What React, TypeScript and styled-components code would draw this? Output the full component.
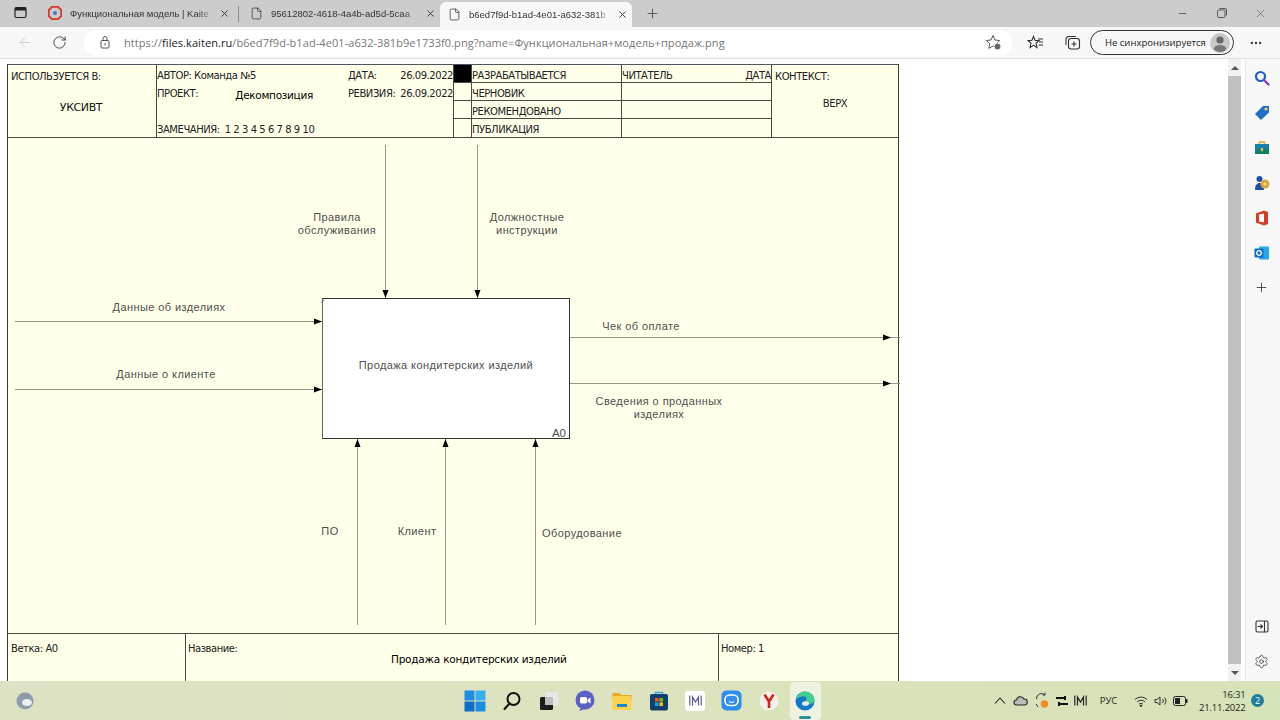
import React from 'react';
import styled, { createGlobalStyle } from 'styled-components';
import { ArrowLeft, Ellipsis, File, Minus, Plus, RotateCw, Settings, X } from 'lucide-react';

const GlobalStyle = createGlobalStyle`
  html, body {
    margin: 0;
    padding: 0;
    width: 1280px;
    height: 720px;
    overflow: hidden;
    background: #fff;
  }
  * { box-sizing: border-box; }
`;

const Page = styled.div`
  width: 1280px;
  height: 720px;
  display: flex;
  flex-direction: column;
  font-family: "Open Sans", "Liberation Sans", sans-serif;
  color: #333;
`;

/* ---- tab strip ---- */
const TabStrip = styled.div`
  height: 27px;
  flex: none;
  display: flex;
  align-items: flex-end;
  background: #cccccc;
  padding-left: 14px;
`;

const TabMenu = styled.div`
  width: 26px;
  height: 27px;
  padding-bottom: 2px;
  display: flex;
  align-items: center;
  color: #222;
`;

const Divider = styled.div`
  width: 1px;
  height: 16px;
  background: #8d8d8d;
  align-self: center;
  flex: none;
`;

const Tab = styled.div<{ $active?: boolean; $width: number; $left?: number; $right?: number }>`
  width: ${(p) => p.$width}px;
  height: ${(p) => (p.$active ? 25 : 26)}px;
  flex: none;
  display: flex;
  align-items: center;
  gap: 8px;
  padding: 0 ${(p) => p.$right ?? 8}px ${(p) => (p.$active ? 1 : 2)}px ${(p) => p.$left ?? 8}px;
  border-radius: 6px 6px 0 0;
  background: ${(p) => (p.$active ? '#f7f7f7' : 'transparent')};
  font-family: "Liberation Sans", Arial, sans-serif;
  font-size: 9.5px;
  color: #333;
`;

const TabTitle = styled.span`
  flex: 1;
  white-space: nowrap;
  mask-image: linear-gradient(to right, #000 90%, rgba(0, 0, 0, 0.25) 100%);
`;

const NewTab = styled.div`
  width: 24px;
  height: 26px;
  margin-left: 8px;
  padding-bottom: 2px;
  display: flex;
  align-items: center;
  justify-content: center;
  color: #333;
`;

const WindowControls = styled.div`
  margin-left: auto;
  display: flex;
  align-items: center;
  height: 26px;
  padding-bottom: 2px;
  color: #555;
`;

const WindowButton = styled.div`
  width: 39px;
  display: flex;
  justify-content: center;
`;

/* ---- toolbar ---- */
const Toolbar = styled.div`
  height: 32px;
  flex: none;
  display: flex;
  align-items: center;
  background: #f7f7f7;
  border-bottom: 1px solid #e2e2e2;
  padding-left: 14px;
`;

const NavButton = styled.div<{ $muted?: boolean; $width: number }>`
  width: ${(p) => p.$width}px;
  flex: none;
  display: flex;
  align-items: center;
  justify-content: center;
  color: ${(p) => (p.$muted ? '#c4c4c4' : '#333')};
`;

const AddressBar = styled.div`
  width: 928px;
  height: 26px;
  flex: none;
  display: flex;
  align-items: center;
  background: #fff;
  border-radius: 13px;
  padding-left: 15px;
  padding-right: 10px;
  font-size: 11px;
`;

const Url = styled.span`
  margin-left: 13px;
  flex: 1;
  color: #777;
  white-space: nowrap;
  letter-spacing: 0.07px;
  b { font-weight: 400; color: #222; }
`;

const SyncPill = styled.div`
  width: 144px;
  height: 25px;
  flex: none;
  margin-left: 4px;
  display: flex;
  align-items: center;
  justify-content: space-between;
  padding: 0 3px 0 14px;
  border: 1px solid #333;
  border-radius: 13px;
  font-size: 9.5px;
  color: #222;
  white-space: nowrap;
`;

const Avatar = styled.div`
  width: 20px;
  height: 20px;
  border-radius: 50%;
  background: #c8c8c8;
  display: flex;
  align-items: center;
  justify-content: center;
  overflow: hidden;
`;

/* ---- main area ---- */
const Main = styled.div`
  flex: 1;
  min-height: 0;
  display: flex;
  background: #fff;
`;

const Viewer = styled.div`
  width: 1228px;
  flex: none;
  overflow: hidden;
  padding: 5px 0 0 7px;
`;

const Sheet = styled.div`
  width: 892px;
  height: 640px;
  display: flex;
  flex-direction: column;
  background: #ffffea;
  border: 1px solid #3a3a30;
  border-top-color: #4d5560;
  font-family: "DejaVu Sans", "Liberation Sans", sans-serif;
  font-size: 10px;
  letter-spacing: -0.45px;
  color: #222;
`;

const Header = styled.div`
  height: 73px;
  flex: none;
  display: grid;
  grid-template-columns: 149px 297px 318px 1fr;
  border-bottom: 1px solid #4a4a40;
`;

const HeaderCell = styled.div`
  padding: 6px 3px;
  border-right: 1px solid #4a4a40;
  &:last-child { border-right: 0; }
`;

const AuthorCell = styled.div`
  border-right: 1px solid #4a4a40;
`;

const UsedAt = styled.div`
  margin-top: 19px;
  text-align: center;
  font-size: 11px;
  letter-spacing: -0.4px;
  padding-right: 2px;
  color: #111;
`;

const AuthorGrid = styled.div`
  display: grid;
  grid-template-columns: 191px 1fr;
  grid-template-rows: 18px 18px 18px 13px;
  height: 72px;
  padding-top: 5px;
  white-space: nowrap;
`;

const DateLine = styled.div`
  display: flex;
  justify-content: space-between;
`;

const ProjectLine = styled.div`
  display: flex;
  justify-content: space-between;
  padding-right: 35px;
`;

const ProjectName = styled.span`
  margin-top: 1px;
  font-size: 10.5px;
  letter-spacing: -0.3px;
  color: #000;
`;

const Remarks = styled.div`
  grid-column: 1 / 3;
  grid-row: 4;
  display: flex;
  gap: 5px;
`;

const StatusGrid = styled.div`
  display: grid;
  grid-template-columns: 18px 150px 150px;
  grid-template-rows: 18px 18px 18px 19px;
  border-right: 1px solid #4a4a40;
`;

const StatusMark = styled.div<{ $filled?: boolean; $last?: boolean }>`
  background: ${(p) => (p.$filled ? '#000' : 'transparent')};
  border-right: 1px solid #4a4a40;
  border-bottom: ${(p) => (p.$last ? 0 : 1)}px solid #4a4a40;
`;

const StatusCell = styled.div<{ $last?: boolean; $split?: boolean; $edge?: boolean }>`
  display: flex;
  align-items: center;
  justify-content: ${(p) => (p.$split ? 'space-between' : 'flex-start')};
  padding: ${(p) => (p.$last ? 2 : 4)}px 1px 0 0;
  white-space: nowrap;
  border-right: ${(p) => (p.$edge ? 0 : 1)}px solid #4a4a40;
  border-bottom: ${(p) => (p.$last ? 0 : 1)}px solid #4a4a40;
`;

const ContextValue = styled.div`
  margin-top: 16px;
  text-align: center;
`;

/* ---- IDEF0 canvas ---- */
const Canvas = styled.div`
  position: relative;
  height: 496px;
  flex: none;
  border-bottom: 1px solid #4a4a40;
  font-family: "Liberation Sans", Arial, sans-serif;
  font-size: 11px;
  letter-spacing: 0.42px;
  color: #4f4f4f;
`;

const Wires = styled.svg`
  position: absolute;
  left: 0;
  top: 0;
  width: 892px;
  height: 495px;
`;

const ActivityBox = styled.div`
  position: absolute;
  left: 314px;
  top: 160px;
  width: 248px;
  height: 141px;
  background: #fff;
  border: 1px solid #333;
  border-left-color: #666;
  display: flex;
  align-items: center;
  justify-content: center;
  padding-bottom: 7px;
`;

const BoxCorner = styled.div`
  position: absolute;
  left: 0;
  top: 0;
  width: 4px;
  height: 4px;
  border-top: 1px solid #777;
  transform: rotate(-45deg) translate(-2px, 0);
`;

const BoxNumber = styled.span`
  position: absolute;
  right: 3px;
  bottom: -1px;
  font-size: 11.5px;
  letter-spacing: 0;
`;

const ArrowLabel = styled.div<{ $x: number; $y: number }>`
  position: absolute;
  left: ${(p) => p.$x}px;
  top: ${(p) => p.$y}px;
  transform: translateX(-50%);
  text-align: center;
  white-space: nowrap;
  line-height: 13px;
`;

/* ---- form footer ---- */
const Footer = styled.div`
  flex: 1;
  display: grid;
  grid-template-columns: 178px 533px 1fr;
`;

const FooterCell = styled.div`
  padding: 9px 2px;
  border-right: 1px solid #4a4a40;
  &:first-child { padding-left: 3px; }
  &:last-child { border-right: 0; }
`;

const FooterTitle = styled.div`
  margin: -1px 0 0 0;
  padding-left: 203px;
  font-size: 10.5px;
  letter-spacing: -0.22px;
  color: #000;
  white-space: nowrap;
`;

/* ---- scrollbar & sidebar ---- */
const ScrollBar = styled.div`
  width: 13px;
  flex: none;
  display: flex;
  flex-direction: column;
  align-items: center;
  background: #f1f1f1;
`;

const ScrollArrow = styled.div<{ $down?: boolean }>`
  height: 17px;
  flex: none;
  display: flex;
  align-items: center;
  justify-content: center;
  &::before {
    content: '';
    border-left: 4px solid transparent;
    border-right: 4px solid transparent;
    ${(p) => (p.$down ? 'border-top: 4px solid #555;' : 'border-bottom: 4px solid #555;')}
  }
`;

const ScrollThumb = styled.div`
  flex: 1;
  width: 100%;
  background: #c0c0c0;
`;

const SideGap = styled.div`
  width: 4px;
  flex: none;
  background: #fff;
`;

const SideBar = styled.div`
  flex: 1;
  display: flex;
  flex-direction: column;
  align-items: center;
  padding: 1px 3px 0 0;
  background: #f7f7f7;
  border-left: 1px solid #e6e6e6;
  color: #333;
`;

const SideItem = styled.div`
  height: 35px;
  flex: none;
  display: flex;
  align-items: center;
  justify-content: center;
`;

const SideBottom = styled.div`
  margin-top: auto;
  padding-bottom: 2px;
`;

/* ---- taskbar ---- */
const Taskbar = styled.div`
  height: 39px;
  flex: none;
  display: flex;
  align-items: center;
  background: linear-gradient(90deg, #dde2c4, #dde3bf 40%, #d6e2b8);
  font-family: "Open Sans", "Liberation Sans", sans-serif;
  color: #222;
`;

const Widget = styled.div`
  width: 457px;
  flex: none;
  padding-left: 16px;
  display: flex;
`;

const AppSlot = styled.div<{ $active?: boolean }>`
  width: ${(p) => (p.$active ? 31 : 36.67)}px;
  margin: 0 ${(p) => (p.$active ? 2.83 : 0)}px;
  height: 38px;
  flex: none;
  position: relative;
  display: flex;
  align-items: center;
  justify-content: center;
  border-radius: 4px;
  background: ${(p) => (p.$active ? 'rgba(255,255,255,0.55)' : 'transparent')};
  &::after {
    content: ${(p) => (p.$active ? "''" : 'none')};
    position: absolute;
    bottom: 1px;
    left: 9.5px;
    width: 12px;
    height: 3px;
    border-radius: 2px;
    background: #2f8f9d;
  }
`;

const Tray = styled.div`
  margin-left: 166px;
  display: flex;
  align-items: center;
`;

const TraySlot = styled.div<{ $width: number }>`
  width: ${(p) => p.$width}px;
  flex: none;
  display: flex;
  align-items: center;
  justify-content: center;
  font-size: 9.5px;
`;

const Clock = styled.div`
  width: 52px;
  text-align: right;
  font-size: 9.5px;
  line-height: 13px;
  letter-spacing: -0.2px;
`;

const Badge = styled.div`
  width: 13px;
  height: 13px;
  margin-left: 5.5px;
  border-radius: 50%;
  background: #1f7f9c;
  color: #fff;
  font-size: 9px;
  display: flex;
  align-items: center;
  justify-content: center;
`;

const AppTile = styled.div`
  width: 20px;
  height: 20px;
  display: flex;
  align-items: center;
  justify-content: center;
  background: #fff;
  border-radius: 3px;
`;

/* ---- drawings ---- */
const stroke = '#96968a';

const Arrowhead = ({ x, y, dir }: { x: number; y: number; dir: 'down' | 'up' | 'right' }) => {
  const pts =
    dir === 'down'
      ? `${x - 3},${y - 8} ${x + 3},${y - 8} ${x},${y}`
      : dir === 'up'
      ? `${x - 3},${y + 8} ${x + 3},${y + 8} ${x},${y}`
      : `${x - 8},${y - 3} ${x - 8},${y + 3} ${x},${y}`;
  return <polygon points={pts} fill="#000" />;
};

const DiagramWires = () => (
  <Wires viewBox="0 0 892 495">
    <g stroke={stroke} strokeWidth="1" fill="none">
      <path d="M377.5 7V160" />
      <path d="M469.5 7V160" />
      <path d="M7 183.5H314" />
      <path d="M7 251.5H314" />
      <path d="M562 199.5H892" />
      <path d="M562 245.5H892" />
      <path d="M349.5 301V487" />
      <path d="M437.5 301V487" />
      <path d="M527.5 301V487" />
    </g>
    <Arrowhead x={377.5} y={160} dir="down" />
    <Arrowhead x={469.5} y={160} dir="down" />
    <Arrowhead x={314} y={183.5} dir="right" />
    <Arrowhead x={314} y={251.5} dir="right" />
    <Arrowhead x={883} y={199.5} dir="right" />
    <Arrowhead x={883} y={245.5} dir="right" />
    <Arrowhead x={349.5} y={301} dir="up" />
    <Arrowhead x={437.5} y={301} dir="up" />
    <Arrowhead x={527.5} y={301} dir="up" />
  </Wires>
);

const TabMenuIcon = () => (
  <svg width="13" height="13" viewBox="0 0 13 13">
    <rect x="1" y="1.5" width="11" height="10" rx="1.5" fill="none" stroke="#222" strokeWidth="1.2" />
    <rect x="1" y="1.5" width="11" height="3" fill="#222" />
  </svg>
);

const KaitenIcon = () => (
  <svg width="14" height="14" viewBox="0 0 14 14">
    <polygon points="4,0.8 10,0.8 13.2,4 13.2,10 10,13.2 4,13.2 0.8,10 0.8,4" fill="none" stroke="#d8362a" strokeWidth="1.8" />
    <circle cx="7" cy="7" r="2" fill="#3f7fc4" />
  </svg>
);

const PageLock = () => (
  <svg width="12" height="13" viewBox="0 0 12 13" fill="none" stroke="#555" strokeWidth="1">
    <rect x="2" y="4.5" width="8" height="7.5" rx="1" />
    <path d="M4 4.5V2.5a2 2 0 0 1 4 0v2" />
    <path d="M6 7v2.5" />
  </svg>
);

const StarAdd = () => (
  <svg width="17" height="17" viewBox="0 0 17 17" fill="none" stroke="#555" strokeWidth="1">
    <path d="M8 1.5l2 4.5 4.7.5-3.5 3.2 1 4.6L8 12l-4.2 2.3 1-4.6L1.3 6.5 6 6z" />
    <circle cx="12.5" cy="12.5" r="3.5" fill="#666" stroke="#f7f7f7" />
  </svg>
);

const Favorites = () => (
  <svg width="17" height="16" viewBox="0 0 17 16" fill="none" stroke="#333" strokeWidth="1.1">
    <path d="M6.5 1.5l1.7 4h3.8l-3 2.8 1 4.2-3.5-2.2L3 12.5l1-4.2L1 5.5h3.8z" />
    <path d="M11 4h5M12 7h4M11.5 10h4.5" />
  </svg>
);

const Collections = () => (
  <svg width="17" height="17" viewBox="0 0 17 17" fill="none" stroke="#333" strokeWidth="1.1">
    <rect x="4.5" y="4.5" width="11" height="10.5" rx="2.5" />
    <path d="M10 7.5v5M7.5 10h5" />
    <path d="M12 2.5H5A3 3 0 0 0 2 5.5V11" />
  </svg>
);

const AvatarFigure = () => (
  <svg width="20" height="20" viewBox="0 0 20 20">
    <circle cx="10" cy="7" r="3.6" fill="#666" />
    <ellipse cx="10" cy="15.5" rx="6" ry="3.6" fill="#777" />
  </svg>
);

const RestoreIcon = () => (
  <svg width="10" height="10" viewBox="0 0 10 10" fill="none" stroke="#555" strokeWidth="1">
    <rect x="0.5" y="2" width="7.5" height="7.5" rx="1.3" />
    <path d="M2.5 .5h5.5a1.5 1.5 0 0 1 1.5 1.5v5.5" />
  </svg>
);

const SearchColor = () => (
  <svg width="16" height="16" viewBox="0 0 16 16" fill="none">
    <circle cx="6.5" cy="6.5" r="4.5" stroke="#1d5fc4" strokeWidth="2.2" />
    <path d="M10 10l4.5 4.5" stroke="#8a3fc9" strokeWidth="2.4" strokeLinecap="round" />
  </svg>
);

const TagColor = () => (
  <svg width="16" height="16" viewBox="0 0 16 16">
    <path d="M9 1h6v6.5L7 15 1 9z" fill="#1f6fc8" />
    <circle cx="12" cy="4" r="1.6" fill="#f4d35e" />
  </svg>
);

const CaseColor = () => (
  <svg width="16" height="15" viewBox="0 0 16 15">
    <path d="M5.5 4V2h5v2" fill="none" stroke="#e2a72e" strokeWidth="1.4" />
    <rect x="1" y="4" width="14" height="5" fill="#1c7fa6" />
    <rect x="1" y="9" width="14" height="5" fill="#17806d" />
    <rect x="7" y="8" width="2" height="3" fill="#f1c34a" />
  </svg>
);

const PeopleColor = () => (
  <svg width="16" height="16" viewBox="0 0 16 16">
    <circle cx="5.5" cy="4" r="3" fill="#1d4fa8" />
    <path d="M1 15c0-5 2-7 4.5-7S10 10 10 15z" fill="#1d4fa8" />
    <circle cx="11" cy="9" r="4.5" fill="#e0a53a" />
    <circle cx="11" cy="9" r="1.5" fill="#f5dd9a" />
  </svg>
);

const OfficeColor = () => (
  <svg width="14" height="16" viewBox="0 0 14 16">
    <path d="M1 3.5L9 0.5l4 1.5v12l-4 1.5-8-3z" fill="#d83b1f" />
    <path d="M4 4.5L9 3.5v9l-5-1z" fill="#fff" />
  </svg>
);

const OutlookColor = () => (
  <svg width="16" height="16" viewBox="0 0 16 16">
    <rect x="5" y="1.5" width="10" height="13" rx="1" fill="#28a8ea" />
    <rect x="0.5" y="3.5" width="9" height="9" rx="1" fill="#0f6cbd" />
    <circle cx="5" cy="8" r="2.3" fill="none" stroke="#fff" strokeWidth="1.3" />
  </svg>
);

const PanelIcon = () => (
  <svg width="14" height="13" viewBox="0 0 14 13" fill="none" stroke="#333" strokeWidth="1.1">
    <rect x="1" y="1" width="12" height="11" rx="1.5" />
    <path d="M9.5 1v11M2.5 6.5h4.5M5.5 4.5l2 2-2 2" />
  </svg>
);

const EdgeWidget = () => (
  <svg width="18" height="18" viewBox="0 0 18 18">
    <circle cx="9" cy="9" r="8.5" fill="#8e9bab" />
    <ellipse cx="11" cy="10.5" rx="5" ry="3.6" fill="#eef1ee" />
  </svg>
);

const WindowsIcon = () => (
  <svg width="22" height="22" viewBox="0 0 22 22">
    <rect x="0.5" y="0.5" width="10" height="10" fill="#1c8ee0" />
    <rect x="11.5" y="0.5" width="10" height="10" fill="#35aef0" />
    <rect x="0.5" y="11.5" width="10" height="10" fill="#0f6fc4" />
    <rect x="11.5" y="11.5" width="10" height="10" fill="#1c8ee0" />
  </svg>
);

const SearchIcon = () => (
  <svg width="20" height="20" viewBox="0 0 20 20" fill="none" stroke="#111" strokeWidth="2">
    <circle cx="11.5" cy="8" r="6" />
    <path d="M7.5 12.5L2.5 18" strokeLinecap="round" />
  </svg>
);

const TaskViewIcon = () => (
  <svg width="20" height="20" viewBox="0 0 20 20">
    <rect x="6" y="1" width="13" height="13" rx="1.5" fill="#e6e6e6" />
    <rect x="1" y="6" width="13" height="13" rx="1.5" fill="#1c1c1c" />
    <rect x="6" y="6" width="8" height="8" fill="#bdbdbd" />
  </svg>
);

const MeetIcon = () => (
  <svg width="20" height="21" viewBox="0 0 20 21">
    <circle cx="10" cy="10" r="9.5" fill="#5b5fc7" />
    <path d="M6 18l-2 3 6-2z" fill="#5b5fc7" />
    <rect x="5" y="7" width="7" height="6.5" rx="1.5" fill="#fff" />
    <path d="M12.5 9.5L15.5 7.5v6l-3-2z" fill="#fff" />
  </svg>
);

const FolderIcon = () => (
  <svg width="20" height="20" viewBox="0 0 20 20">
    <path d="M0.5 2h7l2 2h10v4H.5z" fill="#e9a824" />
    <rect x="0.5" y="5" width="19" height="14" rx="1" fill="#fbd24e" />
    <rect x="5" y="13" width="10" height="3" fill="#1a86d0" />
  </svg>
);

const StoreIcon = () => (
  <svg width="20" height="21" viewBox="0 0 20 21">
    <path d="M6.5 4V2.5h7V4" fill="none" stroke="#3ba6e0" strokeWidth="1.3" />
    <rect x="1" y="4" width="18" height="16.5" rx="2" fill="#123f6e" />
    <rect x="6" y="8" width="3.6" height="3.6" fill="#f25022" />
    <rect x="10.4" y="8" width="3.6" height="3.6" fill="#7fba00" />
    <rect x="6" y="12.4" width="3.6" height="3.6" fill="#00a4ef" />
    <rect x="10.4" y="12.4" width="3.6" height="3.6" fill="#ffb900" />
  </svg>
);

const MailMark = ({ color = '#5b5f97' }: { color?: string }) => (
  <svg width="13" height="11" viewBox="0 0 13 11" fill="none" stroke={color} strokeWidth="1.2">
    <path d="M0.8 0.5v10M12.2 0.5v10M3.5 10.500V2l3 5 3-5v8.500" />
  </svg>
);

const MailApp = () => (
  <AppTile>
    <MailMark />
  </AppTile>
);

const ChatIcon = () => (
  <svg width="21" height="21" viewBox="0 0 21 21">
    <rect x="0.5" y="0.5" width="20" height="20" rx="5" fill="#2f8cf0" />
    <rect x="4" y="5" width="13" height="10.5" rx="4.5" fill="none" stroke="#fff" strokeWidth="1.6" />
    <path d="M8 11.5c1.5 1.2 3.5 1.2 5 0" fill="none" stroke="#fff" strokeWidth="1.2" />
  </svg>
);

const YandexIcon = () => (
  <svg width="20" height="20" viewBox="0 0 20 20">
    <circle cx="10" cy="10" r="9.5" fill="#f4f1ea" />
    <path d="M5.5 3.5L10 10.5l4.5-7M10 10.5V17" fill="none" stroke="#d4201f" strokeWidth="2.6" />
  </svg>
);

const EdgeIcon = () => (
  <svg width="20" height="20" viewBox="0 0 20 20">
    <circle cx="10" cy="10" r="9.5" fill="#1478c8" />
    <path d="M1 9C2 3 7 .5 10 .5c5 0 9.500 4 9.500 8.500 0 3-3 4-5 4-2.500 0-4-1-4-2.500 0-1 1-2 1-3C11.500 6 9 5 7 5.500 4 6.300 2 7 1 9z" fill="#3fcf8e" />
    <ellipse cx="10.500" cy="12.500" rx="3.500" ry="2.300" fill="#e8f1ea" />
  </svg>
);

const CloudIcon = () => (
  <svg width="15" height="11" viewBox="0 0 15 11" fill="#bbb" stroke="#222" strokeWidth="1.1">
    <path d="M3.500 10a2.500 2.500 0 0 1 0-5 4 4 0 0 1 7.500-1 3 3 0 0 1 .5 6z" />
  </svg>
);

const SyncTrayIcon = () => (
  <svg width="14" height="17" viewBox="0 0 14 17" fill="none" stroke="#333" strokeWidth="1">
    <path d="M1.500 7a5 5 0 0 1 8.500-4M10 .5V3H7.500M1 12l2 3" />
    <circle cx="9.500" cy="12" r="3.700" fill="#f08c1e" stroke="none" />
  </svg>
);

const SwitchIcon = () => (
  <svg width="14" height="12" viewBox="0 0 14 12" stroke="#111" strokeWidth="2" fill="none">
    <path d="M1 3h8M5 9h8" />
    <rect x="9" y="1" width="2" height="4" fill="#111" strokeWidth="0" />
    <rect x="3" y="7" width="2" height="4" fill="#111" strokeWidth="0" />
  </svg>
);

const WifiIcon = () => (
  <svg width="14" height="12" viewBox="0 0 14 12" fill="none" stroke="#333" strokeWidth="1">
    <path d="M1 4.500a8.500 8.500 0 0 1 12 0M3 7a5.500 5.500 0 0 1 8 0M5 9.300a2.500 2.500 0 0 1 4 0" />
    <circle cx="7" cy="10.800" r=".8" fill="#333" />
  </svg>
);

const VolumeIcon = () => (
  <svg width="14" height="12" viewBox="0 0 14 12" fill="none" stroke="#333" strokeWidth="1">
    <path d="M1 4.500v3h2l3 2.500V2L3 4.500z" />
    <path d="M8.500 4a3 3 0 0 1 0 4M10.500 2.500a5 5 0 0 1 0 7" />
  </svg>
);

const BatteryIcon = () => (
  <svg width="15" height="10" viewBox="0 0 15 10">
    <rect x="0.500" y="0.500" width="12" height="9" rx="2" fill="none" stroke="#222" />
    <rect x="2" y="2" width="5" height="6" fill="#222" />
    <rect x="13" y="3" width="1.500" height="4" fill="#222" />
  </svg>
);

const ChevronTray = () => (
  <svg width="12" height="7" viewBox="0 0 12 7" fill="none" stroke="#222" strokeWidth="1.1">
    <path d="M1 6.500l5-5.500 5 5.500" />
  </svg>
);

const statusRows = [
  { label: 'РАЗРАБАТЫВАЕТСЯ', filled: true },
  { label: 'ЧЕРНОВИК' },
  { label: 'РЕКОМЕНДОВАНО' },
  { label: 'ПУБЛИКАЦИЯ', last: true },
];

const sideApps = [
  <SearchColor />,
  <TagColor />,
  <CaseColor />,
  <PeopleColor />,
  <OfficeColor />,
  <OutlookColor />,
  <Plus size={15} strokeWidth={1.3} />,
];

const taskApps = [
  <WindowsIcon />,
  <SearchIcon />,
  <TaskViewIcon />,
  <MeetIcon />,
  <FolderIcon />,
  <StoreIcon />,
  <MailApp />,
  <ChatIcon />,
  <YandexIcon />,
];

const App = () => (
  <Page>
    <GlobalStyle />
    <TabStrip>
      <TabMenu>
        <TabMenuIcon />
      </TabMenu>
      <Tab $width={198}>
        <KaitenIcon />
        <TabTitle>Функциональная модель | Kaite</TabTitle>
        <X size={11} />
      </Tab>
      <Divider />
      <Tab $width={201} $left={11} $right={4}>
        <File size={13} strokeWidth={1.4} />
        <TabTitle>95612802-4618-4a4b-ad5d-5caa</TabTitle>
        <X size={11} />
      </Tab>
      <Tab $active $width={192} $right={4}>
        <File size={13} strokeWidth={1.4} />
        <TabTitle>b6ed7f9d-b1ad-4e01-a632-381b</TabTitle>
        <X size={11} />
      </Tab>
      <NewTab>
        <Plus size={15} strokeWidth={1.2} />
      </NewTab>
      <WindowControls>
        <WindowButton>
          <Minus size={11} />
        </WindowButton>
        <WindowButton>
          <RestoreIcon />
        </WindowButton>
        <WindowButton>
          <X size={13} strokeWidth={1.2} />
        </WindowButton>
      </WindowControls>
    </TabStrip>

    <Toolbar>
      <NavButton $muted $width={20}>
        <ArrowLeft size={15} strokeWidth={1.3} />
      </NavButton>
      <NavButton $width={50}>
        <RotateCw size={15} strokeWidth={1.4} />
      </NavButton>
      <AddressBar>
        <PageLock />
        <Url>
          https://<b>files.kaiten.ru</b>/b6ed7f9d-b1ad-4e01-a632-381b9e1733f0.png?name=Функциональная+модель+продаж.png
        </Url>
        <StarAdd />
      </AddressBar>
      <NavButton $width={46}>
        <Favorites />
      </NavButton>
      <NavButton $width={28}>
        <Collections />
      </NavButton>
      <SyncPill>
        Не синхронизируется
        <Avatar>
          <AvatarFigure />
        </Avatar>
      </SyncPill>
      <NavButton $width={44}>
        <Ellipsis size={14} />
      </NavButton>
    </Toolbar>

    <Main>
      <Viewer>
        <Sheet>
          <Header>
            <HeaderCell>
              ИСПОЛЬЗУЕТСЯ В:
              <UsedAt>УКСИВТ</UsedAt>
            </HeaderCell>
            <AuthorCell>
              <AuthorGrid>
                <span>АВТОР: Команда №5</span>
                <DateLine>
                  <span>ДАТА:</span>
                  <span>26.09.2022</span>
                </DateLine>
                <ProjectLine>
                  <span>ПРОЕКТ:</span>
                  <ProjectName>Декомпозиция</ProjectName>
                </ProjectLine>
                <DateLine>
                  <span>РЕВИЗИЯ:</span>
                  <span>26.09.2022</span>
                </DateLine>
                <Remarks>
                  <span>ЗАМЕЧАНИЯ:</span>
                  <span>1 2 3 4 5 6 7 8 9 10</span>
                </Remarks>
              </AuthorGrid>
            </AuthorCell>
            <StatusGrid>
              {statusRows.map((row, i) => (
                <React.Fragment key={row.label}>
                  <StatusMark $filled={row.filled} $last={row.last} />
                  <StatusCell $last={row.last}>{row.label}</StatusCell>
                  <StatusCell $last={row.last} $split={i === 0} $edge>
                    {i === 0 && (
                      <>
                        <span>ЧИТАТЕЛЬ</span>
                        <span>ДАТА</span>
                      </>
                    )}
                  </StatusCell>
                </React.Fragment>
              ))}
            </StatusGrid>
            <HeaderCell>
              КОНТЕКСТ:
              <ContextValue>ВЕРХ</ContextValue>
            </HeaderCell>
          </Header>

          <Canvas>
            <DiagramWires />
            <ActivityBox>
              <BoxCorner />
              Продажа кондитерских изделий
              <BoxNumber>A0</BoxNumber>
            </ActivityBox>
            <ArrowLabel $x={329} $y={73}>
              Правила
              <br />
              обслуживания
            </ArrowLabel>
            <ArrowLabel $x={519} $y={73}>
              Должностные
              <br />
              инструкции
            </ArrowLabel>
            <ArrowLabel $x={161} $y={163}>Данные об изделиях</ArrowLabel>
            <ArrowLabel $x={158} $y={230}>Данные о клиенте</ArrowLabel>
            <ArrowLabel $x={633} $y={182}>Чек об оплате</ArrowLabel>
            <ArrowLabel $x={651} $y={257}>
              Сведения о проданных
              <br />
              изделиях
            </ArrowLabel>
            <ArrowLabel $x={322} $y={387}>ПО</ArrowLabel>
            <ArrowLabel $x={409} $y={387}>Клиент</ArrowLabel>
            <ArrowLabel $x={574} $y={389}>Оборудование</ArrowLabel>
          </Canvas>

          <Footer>
            <FooterCell>Ветка: А0</FooterCell>
            <FooterCell>
              Название:
              <FooterTitle>Продажа кондитерских изделий</FooterTitle>
            </FooterCell>
            <FooterCell>Номер: 1</FooterCell>
          </Footer>
        </Sheet>
      </Viewer>

      <ScrollBar>
        <ScrollArrow />
        <ScrollThumb />
        <ScrollArrow $down />
      </ScrollBar>
      <SideGap />
      <SideBar>
        {sideApps.map((icon, i) => (
          <SideItem key={i}>{icon}</SideItem>
        ))}
        <SideBottom>
          <SideItem>
            <PanelIcon />
          </SideItem>
          <SideItem>
            <Settings size={15} strokeWidth={1.2} />
          </SideItem>
        </SideBottom>
      </SideBar>
    </Main>

    <Taskbar>
      <Widget>
        <EdgeWidget />
      </Widget>
      {taskApps.map((icon, i) => (
        <AppSlot key={i}>{icon}</AppSlot>
      ))}
      <AppSlot $active>
        <EdgeIcon />
      </AppSlot>
      <Tray>
        <TraySlot $width={20}>
          <ChevronTray />
        </TraySlot>
        <TraySlot $width={22}>
          <CloudIcon />
        </TraySlot>
        <TraySlot $width={20}>
          <SyncTrayIcon />
        </TraySlot>
        <TraySlot $width={20}>
          <SwitchIcon />
        </TraySlot>
        <TraySlot $width={18}>
          <MailMark color="#222" />
        </TraySlot>
        <TraySlot $width={38}>РУС</TraySlot>
        <TraySlot $width={26}>
          <WifiIcon />
        </TraySlot>
        <TraySlot $width={14}>
          <VolumeIcon />
        </TraySlot>
        <TraySlot $width={26}>
          <BatteryIcon />
        </TraySlot>
        <Clock>
          16:31
          <br />
          21.11.2022
        </Clock>
        <Badge>2</Badge>
      </Tray>
    </Taskbar>
  </Page>
);

export default App;
